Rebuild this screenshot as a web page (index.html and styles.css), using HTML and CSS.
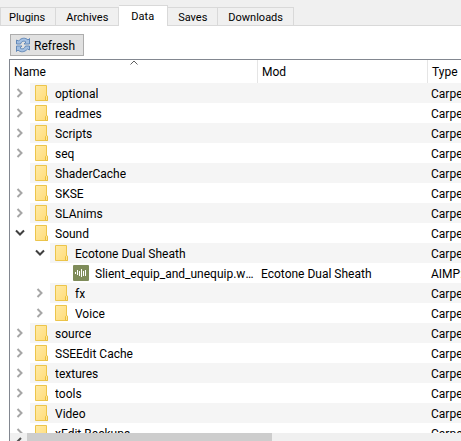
FILE: index.html
```html
<!DOCTYPE html>
<html lang="en">
<head>
<meta charset="utf-8">
<title>Data</title>
<link rel="stylesheet" href="styles.css">
</head>
<body>
<svg class="defs" aria-hidden="true">
  <defs>
    <linearGradient id="paper" x1="0" y1="0" x2="1" y2="1"><stop offset="0" stop-color="#ffeaa6"/><stop offset="1" stop-color="#ffdc78"/></linearGradient>
    <symbol id="folder" viewBox="0 0 14 16">
      <path d="M.5.5h11v10l1 .5v4.500H.5z" fill="url(#paper)" stroke="#ecc54c"/>
      <path d="M10.500 15.500v-4l1-1 1 1v4z" fill="#ffe694" stroke="#e9bf40"/>
    </symbol>
    <symbol id="closed" viewBox="0 0 8 10"><path d="M1.500 1 5.500 5l-4 4" fill="none" stroke="#a6a6a6" stroke-width="2"/></symbol>
    <symbol id="open" viewBox="0 0 10 8"><path d="M1 1.500 5 5.500l4-4" fill="none" stroke="#404040" stroke-width="2"/></symbol>
  </defs>
</svg>
<div class="page">
  <nav class="tabs" role="tablist">
    <button class="tab" role="tab">Plugins</button>
    <button class="tab" role="tab">Archives</button>
    <button class="tab active" role="tab" aria-selected="true">Data</button>
    <button class="tab" role="tab">Saves</button>
    <button class="tab" role="tab">Downloads</button>
  </nav>
  <main class="panel">
    <button class="refresh">
      <svg width="16" height="16" viewBox="0 0 16 16" aria-hidden="true">
        <path d="M1.500 7V3l2 1c3-3.500 7-3.500 9.500-1l1.500-1.500V7H9l2-2C9 3.500 6.500 4 5.500 7z" fill="#a4c0e2" stroke="#6389b8"/>
        <path d="M14.500 9v4l-2-1c-3 3.500-7 3.500-9.500 1l-1.500 1.500V9H7l-2 2c2 1.500 4.500 1 5.500-2z" fill="#a4c0e2" stroke="#6389b8"/>
      </svg>
      <span class="caption">Refresh</span>
    </button>
    <section class="tree">
      <div class="view">
        <table>
          <colgroup><col class="col-name"><col class="col-mod"><col></colgroup>
          <thead>
            <tr>
              <th class="sorted" aria-sort="ascending">Name<svg class="sort" width="8" height="5" viewBox="0 0 8 5" aria-hidden="true"><path d="M.5 4.500 4 1l3.500 3.500" fill="none" stroke="#606060"/></svg></th>
              <th>Mod</th>
              <th>Type</th>
            </tr>
          </thead>
          <tbody id="rows"></tbody>
        </table>
      </div>
      <div class="scrollbar">
        <button class="scroll-left" aria-label="Scroll left"><svg width="8" height="10" viewBox="0 0 8 10"><path d="M6 1 2 5l4 4" fill="none" stroke="#505050" stroke-width="2"/></svg></button>
        <div class="thumb"></div>
      </div>
    </section>
  </main>
</div>
<script src="tree.js"></script>
</body>
</html>
```
FILE: styles.css
```css
* { box-sizing: border-box; }

body {
  margin: 0;
  background: #fff;
  color: #000;
  font: 12px/20px Roboto, "Open Sans", sans-serif;
}

button { font: inherit; color: inherit; }

.defs { position: absolute; width: 0; height: 0; }

.page {
  display: flex;
  flex-direction: column;
  height: 100vh;
  overflow: hidden;
}

.tabs {
  display: flex;
  align-items: flex-end;
  height: 26px;
  flex: none;
  background: #f0f0f0;
  border-bottom: 1px solid #d9d9d9;
  font-size: 11px;
}

.tab {
  height: 18px;
  padding: 2px 10px 0;
  border: 1px solid #d9d9d9;
  border-left-width: 0;
  border-bottom: 0;
  background: #f0f0f0;
  line-height: 16px;
}

.tab:first-child { border-left-width: 1px; padding-left: 8px; }

.tab.active {
  height: 21px;
  margin-bottom: -1px;
  padding: 2px 13px 0 12px;
  background: #fff;
}

.panel {
  display: flex;
  flex-direction: column;
  align-items: flex-start;
  flex: 1;
  min-height: 0;
  padding: 8px 0 0 9px;
}

.refresh {
  display: flex;
  align-items: center;
  gap: 3px;
  height: 22px;
  margin: 0 0 3px 1px;
  padding: 0 8px 0 4px;
  border: 1px solid #adadad;
  background: #e1e1e1;
}

.caption { padding-top: 2px; }

.tree {
  display: flex;
  flex-direction: column;
  flex: 1;
  align-self: stretch;
  min-height: 0;
  border: solid #828790;
  border-width: 1px 0 0 1px;
}

.view {
  flex: 1;
  min-height: 0;
  overflow: hidden;
}

table {
  width: 100%;
  table-layout: fixed;
  border-collapse: separate;
  border-spacing: 0;
}

.col-name { width: 248px; }
.col-mod { width: 170px; }

th {
  position: relative;
  height: 23px;
  padding: 0 4px;
  border-right: 1px solid #e5e5e5;
  font-weight: normal;
  text-align: left;
}

th:last-child { border-right: 0; }

.sort {
  position: absolute;
  top: 0;
  left: calc(50% - 4px);
}

td {
  height: 20px;
  padding: 2px 0 0 3px;
  overflow: hidden;
  line-height: 18px;
  white-space: nowrap;
}

td:first-child { padding: 0; }

tr.shaded td:not(:first-child),
tr.shaded .label { background: #f5f5f5; }

.name { display: flex; height: 20px; }
.level-1 { padding-left: 20px; }
.level-2 { padding-left: 40px; }

.toggle {
  display: flex;
  align-items: center;
  justify-content: center;
  flex: none;
  width: 20px;
  padding: 0;
  border: 0;
  background: none;
}

.label {
  display: flex;
  align-items: center;
  gap: 6px;
  flex: 1;
  min-width: 0;
  padding: 0 4px 0 5px;
}

.label svg { flex: none; }
.label.file { padding-left: 3px; }

.text { padding-top: 2px; overflow: hidden; text-overflow: ellipsis; }

.scrollbar {
  display: flex;
  flex: none;
  height: 8px;
  overflow: hidden;
  background: #f0f0f0;
}

.scroll-left {
  display: flex;
  align-items: center;
  justify-content: center;
  width: 17px;
  height: 17px;
  padding: 0;
  border: 0;
  background: #f0f0f0;
}

.thumb { width: 54.3%; background: #cdcdcd; }
```
FILE: tree.js
```js
const folderType = "Carpeta de archivos";
const entries = [
  { name: "optional", state: "closed" },
  { name: "readmes", state: "closed" },
  { name: "Scripts", state: "closed" },
  { name: "seq", state: "closed" },
  { name: "ShaderCache" },
  { name: "SKSE", state: "closed" },
  { name: "SLAnims", state: "closed" },
  { name: "Sound", state: "open" },
  { name: "Ecotone Dual Sheath", state: "open", level: 1 },
  { name: "Slient_equip_and_unequip.wav", level: 2, mod: "Ecotone Dual Sheath", type: "AIMP: Windows Wave" },
  { name: "fx", state: "closed", level: 1 },
  { name: "Voice", state: "closed", level: 1 },
  { name: "source", state: "closed" },
  { name: "SSEEdit Cache", state: "closed" },
  { name: "textures", state: "closed" },
  { name: "tools", state: "closed" },
  { name: "Video", state: "closed" },
  { name: "xEdit Backups", state: "closed" }
];

const folderIcon = '<svg width="14" height="16" aria-hidden="true"><use href="#folder"/></svg>';
const audioIcon = '<svg width="16" height="16" viewBox="0 0 16 16" aria-hidden="true">' +
  '<rect width="16" height="16" rx="1" fill="#7f8c5a"/>' +
  '<path d="M2.500 7v2M4.500 5v5M6.500 6v5M8.500 4v8M10.500 6v5M12.500 5v6" stroke="#fff"/></svg>';

function toggle(entry) {
  if (!entry.state) return '<span class="toggle"></span>';
  const size = entry.state === "open" ? 'width="10" height="8"' : 'width="8" height="10"';
  return `<button class="toggle" aria-label="${entry.name}" aria-expanded="${entry.state === "open"}">` +
    `<svg ${size}><use href="#${entry.state}"/></svg></button>`;
}

document.getElementById("rows").innerHTML = entries.map((entry, i) => {
  const file = Boolean(entry.type);
  return `<tr class="${i % 2 ? "" : "shaded"}">` +
    `<td><div class="name level-${entry.level || 0}">${toggle(entry)}` +
    `<div class="label ${file ? "file" : ""}">${file ? audioIcon : folderIcon}<span class="text">${entry.name}</span></div></div></td>` +
    `<td>${entry.mod || ""}</td><td>${entry.type || folderType}</td></tr>`;
}).join("");
```
